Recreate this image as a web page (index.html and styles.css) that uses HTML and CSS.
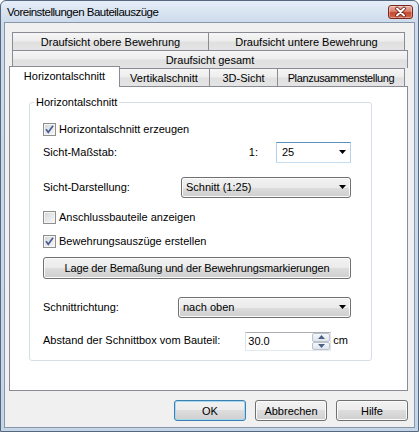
FILE: index.html
```html
<!DOCTYPE html>
<html lang="de">
<head>
    <meta charset="UTF-8">
    <title>Voreinstellungen Bauteilauszüge</title>
    <link rel="stylesheet" href="styles.css">
</head>
<body>

<div class="window">
    <div class="titlebar">
        <span class="title">Voreinstellungen Bauteilauszüge</span>
        <span class="close-btn">
            <svg width="23" height="12" viewBox="0 0 23 12">
                <path d="M8 2.5 L15 9.5 M15 2.5 L8 9.5" stroke="#6b1e12" stroke-width="3.6" stroke-linecap="round"/>
                <path d="M8 2.5 L15 9.5 M15 2.5 L8 9.5" stroke="#fff" stroke-width="2" stroke-linecap="round"/>
            </svg>
        </span>
    </div>

    <div class="client">
        <div class="tabs">
            <div class="tab-row tab-row-top">
                <div class="tab">Draufsicht obere Bewehrung</div>
                <div class="tab">Draufsicht untere Bewehrung</div>
            </div>
            <div class="tab-row tab-row-middle">
                <div class="tab">Draufsicht gesamt</div>
            </div>
            <div class="tab-row tab-row-front">
                <div class="tab tab-horiz tab-active">Horizontalschnitt</div>
                <div class="tab tab-vert">Vertikalschnitt</div>
                <div class="tab tab-3d">3D-Sicht</div>
                <div class="tab tab-plan">Planzusammenstellung</div>
            </div>
        </div>

        <div class="tab-page">
            <fieldset class="group">
                <legend>Horizontalschnitt</legend>

                <div class="field-row">
                    <span class="checkbox">
                        <svg width="11" height="11" viewBox="0 0 11 11"><path d="M2 5.2 L4.3 8.3 L9 1.8" fill="none" stroke="#4a5d94" stroke-width="1.7"/></svg>
                    </span>
                    <span>Horizontalschnitt erzeugen</span>
                </div>

                <div class="field-row gap-1">
                    <span class="label">Sicht-Maßstab:</span>
                    <span class="ratio">1:</span>
                    <div class="combo combo-edit combo-scale">
                        <span>25</span>
                        <svg class="arrow" width="7" height="4" viewBox="0 0 7 4"><polygon points="0,0 7,0 3.5,4" fill="#000"/></svg>
                    </div>
                </div>

                <div class="field-row gap-13">
                    <span class="label">Sicht-Darstellung:</span>
                    <div class="combo combo-view">
                        <span>Schnitt (1:25)</span>
                        <svg class="arrow" width="7" height="4" viewBox="0 0 7 4"><polygon points="0,0 7,0 3.5,4" fill="#000"/></svg>
                    </div>
                </div>

                <div class="field-row gap-8">
                    <span class="checkbox"></span>
                    <span>Anschlussbauteile anzeigen</span>
                </div>

                <div class="field-row gap-2">
                    <span class="checkbox">
                        <svg width="11" height="11" viewBox="0 0 11 11"><path d="M2 5.2 L4.3 8.3 L9 1.8" fill="none" stroke="#4a5d94" stroke-width="1.7"/></svg>
                    </span>
                    <span>Bewehrungsauszüge erstellen</span>
                </div>

                <div class="field-row gap-5">
                    <button class="btn btn-wide">Lage der Bemaßung und der Bewehrungsmarkierungen</button>
                </div>

                <div class="field-row gap-17">
                    <span class="label">Schnittrichtung:</span>
                    <div class="combo combo-direction">
                        <span>nach oben</span>
                        <svg class="arrow" width="7" height="4" viewBox="0 0 7 4"><polygon points="0,0 7,0 3.5,4" fill="#000"/></svg>
                    </div>
                </div>

                <div class="field-row gap-11">
                    <span class="label">Abstand der Schnittbox vom Bauteil:</span>
                    <div class="spin">
                        <span class="spin-value">30.0</span>
                        <div class="spin-buttons">
                            <span class="spin-btn">
                                <svg width="7" height="4" viewBox="0 0 7 4"><polygon points="0,4 7,4 3.5,0" fill="#4d6185"/></svg>
                            </span>
                            <span class="spin-btn">
                                <svg width="7" height="4" viewBox="0 0 7 4"><polygon points="0,0 7,0 3.5,4" fill="#4d6185"/></svg>
                            </span>
                        </div>
                    </div>
                    <span class="unit">cm</span>
                </div>
            </fieldset>
        </div>

        <div class="dialog-buttons">
            <button class="btn btn-default">OK</button>
            <button class="btn">Abbrechen</button>
            <button class="btn">Hilfe</button>
        </div>
    </div>
</div>

</body>
</html>
```

FILE: styles.css
```css
* {
    box-sizing: border-box;
}

body {
    margin: 0;
    font-family: "Liberation Sans", Arial, sans-serif;
    font-size: 11px;
    color: #000;
    background: #fff;
}

/* window frame */

.window {
    width: 419px;
    height: 432px;
    display: flex;
    flex-direction: column;
    padding: 0 3px 3px 3px;
    border: 1px solid #56687f;
    border-radius: 6px 6px 0 0;
    background: linear-gradient(#e6eef8, #ccdaeb 22px, #c5d5e8);
}

.titlebar {
    height: 21px;
    display: flex;
    align-items: center;
    justify-content: space-between;
    padding: 0 2px 0 3px;
}

.title {
    font-size: 11.5px;
    letter-spacing: -0.5px;
    padding-top: 1px;
}

.close-btn {
    width: 25px;
    height: 14px;
    display: flex;
    align-items: center;
    justify-content: center;
    border: 1px solid #7a2a1c;
    border-radius: 3px;
    background: linear-gradient(#eab1a5, #d9826f 45%, #c6472f 55%, #d4664c);
    box-shadow: inset 0 0 0 1px rgba(255, 255, 255, 0.35);
}

.client {
    flex: 1;
    display: flex;
    flex-direction: column;
    padding: 9px 6px 0 4px;
    border: 1px solid #8796a8;
    background: #f0f0f0;
}

/* tabs */

.tab-row {
    display: flex;
    height: 18px;
}

.tab-row-top {
    margin: 0 3px;
}

.tab-row-middle {
    margin: 0 0 0 3px;
}

.tab-row-front {
    margin: 0 3px 0 2px;
}

.tab {
    height: 18px;
    display: flex;
    align-items: center;
    justify-content: center;
    white-space: nowrap;
    border: 1px solid #898c95;
    border-bottom: none;
    background: linear-gradient(#f6f6f6, #ededed 45%, #e0e0e0 55%, #e4e4e4);
}

.tab + .tab {
    margin-left: -1px;
}

.tab-row-top .tab,
.tab-row-middle .tab {
    flex: 1;
}

.tab-horiz {
    width: 108px;
}

.tab-vert {
    width: 92px;
}

.tab-3d {
    width: 69px;
}

.tab-plan {
    width: 128px;
    flex-shrink: 0;
    letter-spacing: -0.35px;
}

.tab-active {
    position: relative;
    z-index: 2;
    width: 111px;
    height: 21px;
    margin: -2px -1px 0 -2px;
    padding-bottom: 2px;
    background: #fff;
}

.tab-page {
    flex: 1;
    background: #fff;
    border: 1px solid #898c95;
}

/* group box */

.group {
    margin: 9px 35px 0 19px;
    padding: 9px 20px 9px 13px;
    border: 1px solid #d5dfe5;
    border-radius: 3px;
    min-width: 0;
}

.group legend {
    margin-left: -9px;
    padding: 0 2px;
    line-height: 13px;
}

.field-row {
    display: flex;
    align-items: center;
    height: 22px;
}

.gap-1 { margin-top: 1px; }
.gap-2 { margin-top: 2px; }
.gap-5 { margin-top: 5px; }
.gap-8 { margin-top: 8px; }
.gap-11 { margin-top: 11px; }
.gap-13 { margin-top: 13px; }
.gap-17 { margin-top: 17px; }

.label {
    flex: 1;
}

.ratio {
    margin-right: 18px;
}

.checkbox {
    width: 13px;
    height: 13px;
    margin-right: 3px;
    display: flex;
    align-items: center;
    justify-content: center;
    border: 1px solid #8e8f8f;
    background: linear-gradient(135deg, #d3d6da, #f8f8f8);
    box-shadow: inset 0 0 0 1px #f4f4f4;
}

/* combo boxes */

.combo {
    height: 21px;
    display: flex;
    align-items: center;
    justify-content: space-between;
    padding: 0 4px 0 4px;
    border: 1px solid #707070;
    border-radius: 3px;
    background: linear-gradient(#f2f2f2, #ebebeb 50%, #dddddd 50%, #cfcfcf);
    box-shadow: inset 0 0 0 1px #fbfbfb;
}

.combo-edit {
    padding-left: 5px;
    border-radius: 0;
    border-color: #5a8fbf #b5d1ea #c5def2 #b5d1ea;
    background: #fff;
    box-shadow: none;
}

.combo-scale {
    width: 75px;
}

.combo-view {
    width: 170px;
}

.combo-direction {
    width: 173px;
}

/* spin box */

.spin {
    width: 86px;
    height: 19px;
    margin-top: 3px;
    display: flex;
    border: 1px solid;
    border-color: #abadb3 #e2e3ea #e3e9ef #e2e3ea;
    background: #fff;
}

.spin-value {
    flex: 1;
    padding-left: 2px;
    line-height: 17px;
}

.spin-buttons {
    width: 18px;
    display: flex;
    flex-direction: column;
}

.spin-btn {
    flex: 1;
    display: flex;
    align-items: center;
    justify-content: center;
    border: 1px solid #b8c3cf;
    border-radius: 2px;
    background: linear-gradient(#f5f7fa, #dfe5ec);
}

.unit {
    margin: 0 3px 0 2px;
}

/* buttons */

.btn {
    height: 21px;
    padding: 0;
    font: inherit;
    color: #000;
    border: 1px solid #707070;
    border-radius: 3px;
    background: linear-gradient(#f2f2f2, #ebebeb 50%, #dddddd 50%, #cfcfcf);
    box-shadow: inset 0 0 0 1px #fbfbfb;
}

.btn-wide {
    width: 100%;
    height: 22px;
    letter-spacing: -0.15px;
}

.dialog-buttons {
    display: flex;
    justify-content: flex-end;
    gap: 9px;
    margin: 9px 0 6px;
}

.dialog-buttons .btn {
    width: 72px;
}

.btn-default {
    border-color: #3c7fb1;
    box-shadow: inset 0 0 0 1px #a7d8f2;
}
```
